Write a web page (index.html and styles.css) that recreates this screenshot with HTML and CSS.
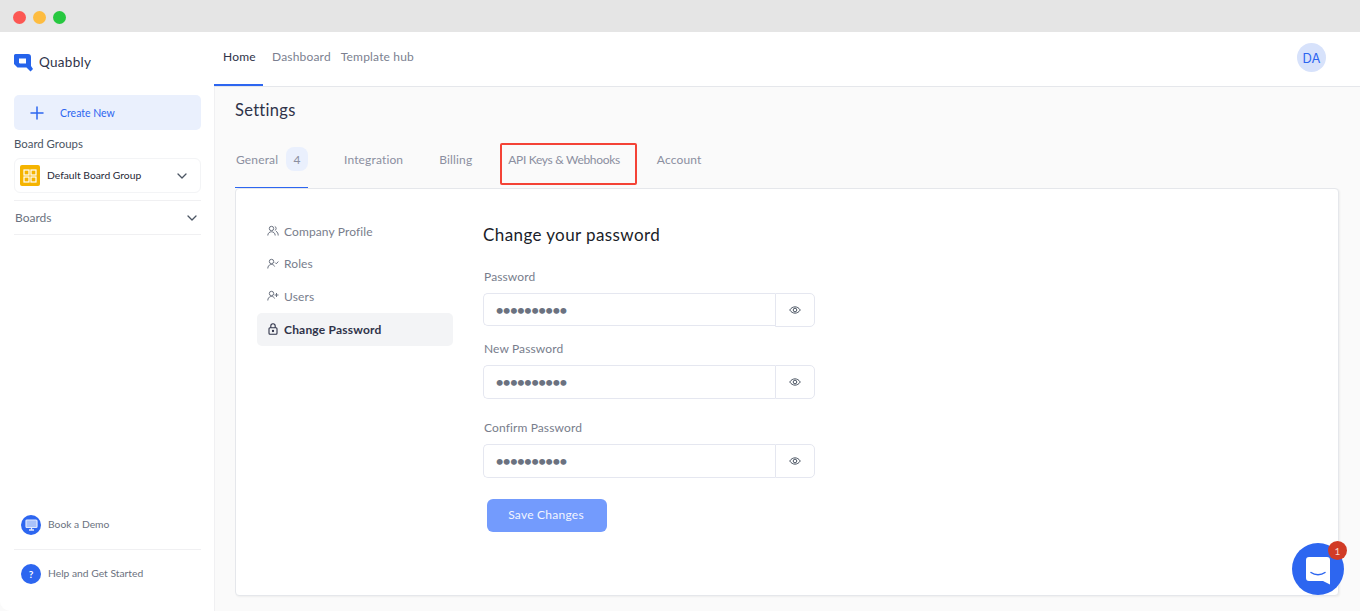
FILE: index.html
```html
<!DOCTYPE html>
<html lang="en">
<head>
<meta charset="utf-8">
<title>Quabbly Settings</title>
<link rel="stylesheet" href="styles.css">
</head>
<body>
<div class="window">
  <header class="titlebar">
    <span class="light red"></span><span class="light yellow"></span><span class="light green"></span>
  </header>
  <div class="app">
    <aside class="sidebar">
      <div class="logo">
        <svg width="19" height="18" viewBox="0 0 19 18"><path fill-rule="evenodd" d="M0 1.500Q0 0 1.500 0H14Q17 0 17 3V12L19 15 16.500 17.500 12.500 13.500H3.500L0 10ZM5 4.500V9L6 9.500H12V4.500Z" fill="#2563eb"/></svg>
        <span class="logo-text">Quabbly</span>
      </div>
      <button class="create"><svg width="14" height="14" viewBox="0 0 14 14"><path d="M7 1v12M1 7h12" stroke="#2d66f0" stroke-width="1.500" stroke-linecap="round"/></svg><span>Create New</span></button>
      <div class="group-label">Board Groups</div>
      <div class="group-select">
        <span class="group-icon"><svg width="14" height="14" viewBox="0 0 14 14" fill="none" stroke="#fff" stroke-width="1.200"><rect x="1" y="1" width="5" height="5"/><rect x="8" y="1" width="5" height="5"/><rect x="1" y="8" width="5" height="5"/><rect x="8" y="8" width="5" height="5"/></svg></span>
        <span class="group-name">Default Board Group</span>
        <svg class="chev" width="10" height="6" viewBox="0 0 10 6"><path d="M1 1l4 4 4-4" fill="none" stroke="#4b5563" stroke-width="1.300" stroke-linecap="round" stroke-linejoin="round"/></svg>
      </div>
      <div class="boards">
        <span>Boards</span>
        <svg width="10" height="6" viewBox="0 0 10 6"><path d="M1 1l4 4 4-4" fill="none" stroke="#4b5563" stroke-width="1.300" stroke-linecap="round" stroke-linejoin="round"/></svg>
      </div>
      <div class="side-foot">
        <div class="foot-row">
          <span class="foot-icon"><svg width="13" height="12" viewBox="0 0 13 12"><rect x="1" y="1" width="11" height="7.500" rx="1" fill="#a9c2fa" stroke="#dfe8fe" stroke-width="1.200"/><path d="M4 11h5M6.500 8.500V11" stroke="#dfe8fe" stroke-width="1.300"/></svg></span>
          <span class="foot-text">Book a Demo</span>
        </div>
        <div class="foot-row second">
          <span class="foot-icon q">?</span>
          <span class="foot-text">Help and Get Started</span>
        </div>
      </div>
    </aside>
    <div class="main">
      <nav class="topnav">
        <a class="nav-item active">Home</a>
        <a class="nav-item dash">Dashboard</a>
        <a class="nav-item hub">Template hub</a>
        <span class="avatar">DA</span>
      </nav>
      <div class="content">
        <h1 class="page-title">Settings</h1>
        <div class="tabs">
          <a class="tab general">General <span class="count">4</span></a>
          <a class="tab integ">Integration</a>
          <a class="tab bill">Billing</a>
          <a class="tab api">API Keys &amp; Webhooks</a>
          <a class="tab">Account</a>
          <span class="highlight"></span>
        </div>
        <section class="card">
          <ul class="menu">
            <li class="menu-item"><svg width="12" height="12" viewBox="0 0 12 12" fill="none" stroke="#6b7280" stroke-width="1"><circle cx="4.500" cy="3.500" r="2.200"/><path d="M0.800 10.500c0-5 7.400-5 7.400 0M7.800 1.500c1.800.4 1.800 3.500 0 4M9 6.300c1.500.6 2.200 2.200 2.200 4.200"/></svg>Company Profile</li>
            <li class="menu-item"><svg width="12" height="12" viewBox="0 0 12 12" fill="none" stroke="#6b7280" stroke-width="1"><circle cx="4.500" cy="3.500" r="2.200"/><path d="M0.800 10.500c0-5 6-5 6.800-2M8 4.500l1.300 1.300 2-2.300"/></svg>Roles</li>
            <li class="menu-item"><svg width="12" height="12" viewBox="0 0 12 12" fill="none" stroke="#6b7280" stroke-width="1"><circle cx="4.500" cy="3.500" r="2.200"/><path d="M0.800 10.500c0-5 6-5 6.800-2M9.500 3v4M7.500 5h4"/></svg>Users</li>
            <li class="menu-item current"><svg width="12" height="12" viewBox="0 0 12 12" fill="none" stroke="#2f3349" stroke-width="1.100"><rect x="2" y="4.800" width="8" height="6.500" rx="1"/><path d="M3.800 4.800V3a2.200 2.200 0 0 1 4.400 0v1.800"/><circle cx="6" cy="8" r=".6" fill="#2f3349"/></svg>Change Password</li>
          </ul>
          <form class="form">
            <h2 class="form-title">Change your password</h2>
            <label class="field-label first">Password</label>
            <div class="field">
              <input class="input short" type="password" value="1234567890" readonly>
              <span class="addon"><svg width="12" height="10" viewBox="0 0 12 10" fill="none" stroke="#4b5563" stroke-width="1"><path d="M.7 5C3.500.8 8.500.8 11.300 5 8.500 9.200 3.500 9.200.7 5Z"/><circle cx="6" cy="5" r="1.800"/></svg></span>
            </div>
            <label class="field-label second">New Password</label>
            <div class="field">
              <input class="input" type="password" value="1234567890" readonly>
              <span class="addon"><svg width="12" height="10" viewBox="0 0 12 10" fill="none" stroke="#4b5563" stroke-width="1"><path d="M.7 5C3.500.8 8.500.8 11.300 5 8.500 9.200 3.500 9.200.7 5Z"/><circle cx="6" cy="5" r="1.800"/></svg></span>
            </div>
            <label class="field-label third">Confirm Password</label>
            <div class="field">
              <input class="input" type="password" value="1234567890" readonly>
              <span class="addon"><svg width="12" height="10" viewBox="0 0 12 10" fill="none" stroke="#4b5563" stroke-width="1"><path d="M.7 5C3.500.8 8.500.8 11.300 5 8.500 9.200 3.500 9.200.7 5Z"/><circle cx="6" cy="5" r="1.800"/></svg></span>
            </div>
            <button class="save" type="button">Save Changes</button>
          </form>
        </section>
      </div>
    </div>
  </div>
  <div class="chat">
    <svg width="24" height="28" viewBox="0 0 24 28"><path d="M3 0h18a3 3 0 0 1 3 3V27.500l-7-3.500H3a3 3 0 0 1-3-3V3a3 3 0 0 1 3-3Z" fill="#fff"/><path d="M5 15.500c4 3 10 3 14 0" fill="none" stroke="#2d66f0" stroke-width="1.500" stroke-linecap="round"/></svg>
    <span class="chat-badge">1</span>
  </div>
</div>
</body>
</html>
```
FILE: styles.css
```css
* { box-sizing: border-box; }
html, body { margin: 0; height: 100%; }
body { font-family: "Lato", "Noto Sans", sans-serif; background: #f9fafb; color: #6b7280; overflow: hidden; }
.window { position: relative; width: 1360px; height: 611px; overflow: hidden; display: flex; flex-direction: column; background: #fafafa; }
.titlebar { height: 32px; flex: none; background: #e5e5e5; display: flex; align-items: center; gap: 7px; padding: 2px 0 0 13px; }
.light { width: 13px; height: 13px; border-radius: 50%; }
.red { background: #fc5753; }
.yellow { background: #fdbc40; }
.green { background: #27c840; }
.app { flex: 1; display: flex; min-height: 0; }

.sidebar { width: 215px; flex: none; background: #fff; border-right: 1px solid #f0f0f2; border-bottom-left-radius: 10px; padding: 22px 13px 0 14px; display: flex; flex-direction: column; margin-right: -1px; position: relative; z-index: 0; }
.logo { display: flex; align-items: center; gap: 6px; height: 18px; font-size: 13.500px; letter-spacing: .3px; color: #2f3349; }
.logo-text { padding-bottom: 2px; }
.create { margin-top: 23px; height: 35px; border: 0; border-radius: 5px; background: #eaf0fd; display: flex; align-items: center; gap: 16px; padding: 0 0 0 16px; font: inherit; font-size: 10.500px; color: #2d66f0; }
.group-label { margin-top: 7px; font-size: 11.400px; line-height: 14px; color: #4b5563; }
.group-select { margin-top: 7px; height: 35px; border: 1px solid #f3f4f6; border-radius: 6px; display: flex; align-items: center; padding: 0 13px 0 5px; }
.group-icon { width: 20px; height: 21px; border-radius: 2px; background: #f5b400; display: flex; align-items: center; justify-content: center; }
.group-name { margin-left: 7px; flex: 1; padding-bottom: 1px; font-size: 10.300px; color: #1f2937; }
.boards { margin-top: 7px; height: 35px; border-top: 1px solid #f0f0f2; border-bottom: 1px solid #f0f0f2; display: flex; align-items: center; justify-content: space-between; padding: 0 4px 0 1px; font-size: 12px; color: #6b7280; }
.side-foot { margin-top: auto; padding-bottom: 27px; font-size: 10.300px; color: #6b7280; }
.foot-row { display: flex; align-items: center; gap: 7px; padding-left: 7px; height: 20px; }
.foot-text { padding-bottom: 2px; }
.foot-row.second { position: relative; }
.foot-row + .foot-row { margin-top: 29px; }
.foot-row.second::before { content: ""; position: absolute; left: 0; right: 0; top: -15px; border-top: 1px solid #f0f0f2; }
.foot-icon { width: 20px; height: 20px; border-radius: 50%; background: #2d66f0; display: flex; align-items: center; justify-content: center; color: #fff; font-size: 10px; font-weight: 700; }

.main { flex: 1; min-width: 0; display: flex; flex-direction: column; position: relative; }
.topnav { height: 55px; flex: none; background: #fff; border-bottom: 1px solid #e5e7eb; display: flex; align-items: stretch; font-size: 12px; }
.nav-item { display: flex; align-items: center; padding: 0 9px 5px; color: #7b7f90; letter-spacing: .18px; }
.nav-item.active { width: 49px; color: #2f3349; box-shadow: inset 0 -2px 0 #2d66f0; }
.nav-item.dash { padding-right: 0; }
.nav-item.hub { padding-left: 10px; }
.avatar { width: 29px; height: 29px; margin: 11px 34px 0 auto; border-radius: 50%; background: #d7e2fb; color: #2d66f0; font-family: "Inter", sans-serif; font-size: 13px; display: flex; align-items: center; justify-content: center; }

.content { flex: 1; padding: 0 21px 15px 21px; display: flex; flex-direction: column; min-height: 0; }
.page-title { margin: 13px 0 0; font-size: 16.500px; line-height: 20px; font-weight: 400; letter-spacing: .3px; color: #2f3349; }
.tabs { position: relative; height: 58px; margin-top: 10px; display: flex; align-items: center; font-size: 12px; letter-spacing: .15px; color: #8b8fa0; }
.tab { display: flex; align-items: center; margin-right: 36px; }
.tab.general { align-self: stretch; width: 73px; padding-left: 1px; gap: 8px; box-shadow: inset 0 -1px 0 #2d66f0; }
.tab.api { letter-spacing: -.32px; margin-right: 37px; }
.count { width: 22px; height: 24px; border-radius: 8px; background: #eaf0fd; display: flex; align-items: center; justify-content: center; }
.highlight { position: absolute; left: 265px; top: 13px; width: 137px; height: 42px; border: 2px solid #f44336; border-radius: 2px; }

.card { flex: 1; min-height: 0; background: #fff; border: 1px solid #e5e7eb; border-radius: 4px; box-shadow: 1px 1px 2px rgba(0, 0, 0, .05); display: flex; padding: 26px 0 0 21px; }
.menu { list-style: none; margin: 0; padding: 0; width: 196px; flex: none; }
.menu-item { height: 32.500px; display: flex; align-items: center; gap: 5px; padding-left: 10px; font-size: 12px; letter-spacing: .12px; color: #787d8c; border-radius: 5px; }
.menu-item.current { margin-top: .5px; background: #f3f4f6; color: #2f3349; font-weight: 700; letter-spacing: .2px; }
.form { width: 332px; margin-left: 30px; display: flex; flex-direction: column; }
.form-title { margin: 10px 0 0; font-size: 17px; line-height: 20px; font-weight: 400; letter-spacing: .4px; color: #1a1d29; }
.field-label { display: block; padding-left: 1px; font-size: 12px; line-height: 14px; letter-spacing: .12px; color: #787d8c; }
.field-label.first { margin-top: 25px; }
.field-label.second { margin-top: 15px; }
.field-label.third { margin-top: 22px; }
.field { margin-top: 9px; height: 34px; display: flex; }
.input { flex: 1; min-width: 0; height: 34px; border: 1px solid #e5e7f0; border-right: 0; border-radius: 5px 0 0 5px; padding: 0 11px 1px; background: #fff; font-family: inherit; font-size: 16px; letter-spacing: -2.200px; color: #6b7280; outline: 0; }
.input.short { height: 33px; padding-bottom: 0; }
.addon { width: 40px; flex: none; border: 1px solid #e5e7f0; border-radius: 0 5px 5px 0; display: flex; align-items: center; justify-content: center; }
.save { margin: 21px 0 0 4px; width: 120px; height: 33px; padding: 0 2px 3px 0; border: 0; border-radius: 6px; background: #739bfd; color: #f2f5ff; font-family: inherit; font-size: 12px; letter-spacing: .25px; }

.chat { position: absolute; left: 1292px; top: 543px; width: 52px; height: 52px; border-radius: 50%; background: #2d66f0; display: flex; align-items: center; justify-content: center; padding-top: 3px; }
.chat-badge { position: absolute; left: 36px; top: -2px; width: 19px; height: 19px; border-radius: 50%; background: #d13b26; color: #f8d8d0; font-size: 10px; display: flex; align-items: center; justify-content: center; }
```
